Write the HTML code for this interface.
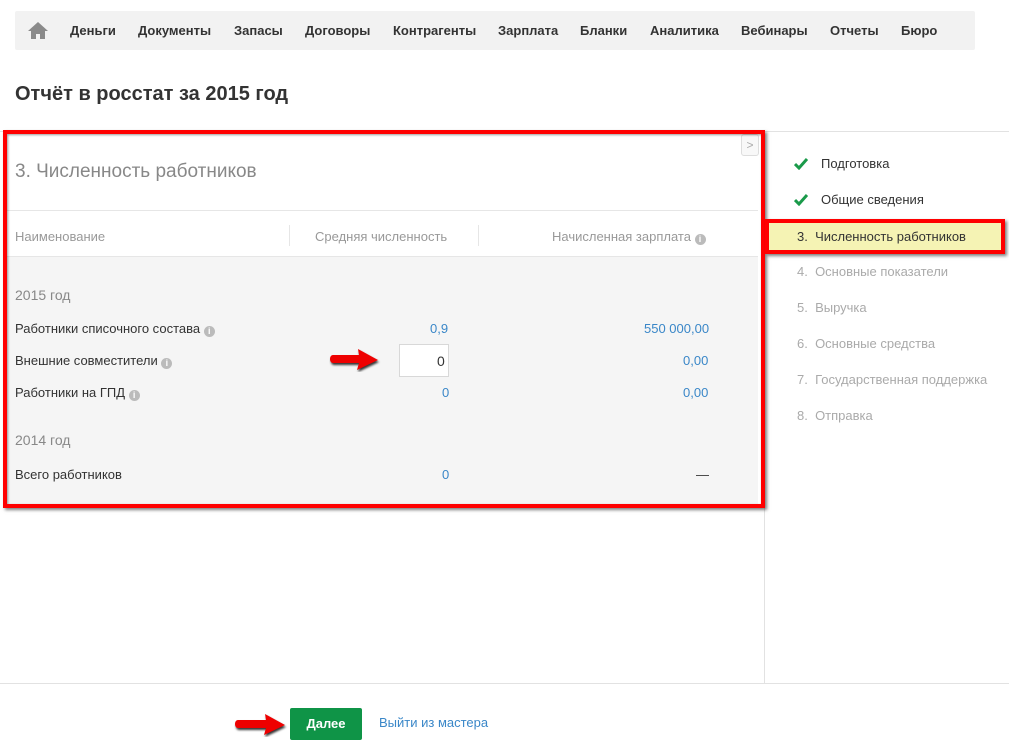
<!DOCTYPE html>
<html><head><meta charset="utf-8"><style>
body{margin:0;width:1009px;height:755px;position:relative;font-family:"Liberation Sans",Arial,sans-serif;background:#fff;overflow:hidden;font-size:13px;color:#333}
.a{position:absolute}
.nav{left:15px;top:11px;width:960px;height:39px;background:#f2f2f2;border-radius:2px}
.nav span{position:absolute;top:12px;font-weight:bold;font-size:13px;color:#333}
.g{color:#999}
.b{color:#3a87c8}
i{display:inline-block;width:11px;height:11px;border-radius:50%;background:#bbb;color:#fff;font-size:9px;text-align:center;line-height:11px;font-weight:bold;font-style:normal;vertical-align:-1px}
</style></head><body>
<div class="a nav">
<svg class="a" style="left:12px;top:10px" width="22" height="19" viewBox="0 0 22 19"><path d="M11 1L1 10h3v8h5v-5h4v5h5v-8h3z" fill="#8a8a8a"/></svg>
<span style="left:55px">Деньги</span><span style="left:123px">Документы</span><span style="left:219px">Запасы</span><span style="left:290px">Договоры</span><span style="left:378px">Контрагенты</span><span style="left:483px">Зарплата</span><span style="left:565px">Бланки</span><span style="left:635px">Аналитика</span><span style="left:726px">Вебинары</span><span style="left:815px">Отчеты</span><span style="left:886px">Бюро</span>
</div>
<div class="a" style="left:15px;top:83px;font-size:20px;font-weight:bold;color:#333">Отчёт в росстат за 2015 год</div>
<div class="a" style="left:0;top:131px;width:1009px;height:1px;background:#e2e2e2"></div>
<div class="a" style="left:764px;top:131px;width:1px;height:552px;background:#e2e2e2"></div>
<div class="a" style="left:0;top:683px;width:1009px;height:1px;background:#e2e2e2"></div>
<div class="a" style="left:7px;top:257px;width:751px;height:248px;background:#f5f5f5"></div>
<div class="a" style="left:7px;top:210px;width:751px;height:1px;background:#e6e6e6"></div>
<div class="a" style="left:7px;top:256px;width:751px;height:1px;background:#e6e6e6"></div>
<div class="a" style="left:741px;top:134px;width:16px;height:20px;border:1px solid #ddd;border-radius:3px;background:#f8f8f8;color:#aaa;font-size:12px;text-align:center;line-height:20px">&gt;</div>
<div class="a" style="left:3px;top:130px;width:754px;height:370px;border:4px solid #f00;box-shadow:2px 2px 3px rgba(0,0,0,.5), inset 1px 1px 2px rgba(0,0,0,.4)"></div>
<div class="a" style="left:15px;top:161px;font-size:19px;color:#888">3. Численность работников</div>
<div class="a g" style="left:15px;top:229px">Наименование</div>
<div class="a" style="left:289px;top:225px;width:1px;height:21px;background:#e6e6e6"></div>
<div class="a g" style="left:315px;top:229px">Средняя численность</div>
<div class="a" style="left:478px;top:225px;width:1px;height:21px;background:#e6e6e6"></div>
<div class="a g" style="left:552px;top:229px">Начисленная зарплата <i>i</i></div>
<div class="a" style="left:15px;top:287px;font-size:14px;color:#888">2015 год</div>
<div class="a" style="left:15px;top:321px">Работники списочного состава <i>i</i></div>
<div class="a b" style="left:430px;top:321px">0,9</div>
<div class="a b" style="left:644px;top:321px">550 000,00</div>
<div class="a" style="left:15px;top:353px">Внешние совместители <i>i</i></div>
<div class="a" style="left:399px;top:344px;width:48px;height:31px;border:1px solid #d8d8d8;background:#fff"></div>
<div class="a" style="left:437px;top:353px;font-size:14px">0</div>
<svg class="a" style="left:329px;top:348px" width="52" height="24" viewBox="0 0 52 24"><path d="M4 7h26l-1-6 20 11-21 10 2-7H4c-4 0-4-8 0-8z" fill="#e00" filter="drop-shadow(1px 2px 1px #333)"/></svg>
<div class="a b" style="left:683px;top:353px">0,00</div>
<div class="a" style="left:15px;top:385px">Работники на ГПД <i>i</i></div>
<div class="a b" style="left:442px;top:385px">0</div>
<div class="a b" style="left:683px;top:385px">0,00</div>
<div class="a" style="left:15px;top:432px;font-size:14px;color:#888">2014 год</div>
<div class="a" style="left:15px;top:467px">Всего работников</div>
<div class="a b" style="left:442px;top:467px">0</div>
<div class="a" style="left:696px;top:467px">—</div>
<svg class="a" style="left:794px;top:158px" width="14" height="12" viewBox="0 0 14 12"><path d="M1 6l4 4 8-9" stroke="#1a9a4a" stroke-width="3" fill="none"/></svg>
<div class="a" style="left:821px;top:156px">Подготовка</div>
<svg class="a" style="left:794px;top:194px" width="14" height="12" viewBox="0 0 14 12"><path d="M1 6l4 4 8-9" stroke="#1a9a4a" stroke-width="3" fill="none"/></svg>
<div class="a" style="left:821px;top:192px">Общие сведения</div>
<div class="a" style="left:765px;top:219px;width:240px;height:35px;background:#f5f3b4;border:4px solid #f00;box-sizing:border-box;box-shadow:2px 2px 3px rgba(0,0,0,.5)"></div>
<div class="a" style="left:797px;top:229px">3.&nbsp;&nbsp;Численность работников</div>
<div class="a g" style="left:797px;top:264px;color:#aaa">4.&nbsp;&nbsp;Основные показатели</div>
<div class="a g" style="left:797px;top:300px;color:#aaa">5.&nbsp;&nbsp;Выручка</div>
<div class="a g" style="left:797px;top:336px;color:#aaa">6.&nbsp;&nbsp;Основные средства</div>
<div class="a g" style="left:797px;top:372px;color:#aaa">7.&nbsp;&nbsp;Государственная поддержка</div>
<div class="a g" style="left:797px;top:408px;color:#aaa">8.&nbsp;&nbsp;Отправка</div>
<div class="a" style="left:290px;top:708px;width:72px;height:32px;background:#0f9447;border-radius:2px;color:#fff;font-weight:bold;text-align:center;line-height:32px">Далее</div>
<svg class="a" style="left:234px;top:713px" width="56" height="24" viewBox="0 0 56 24"><path d="M4 7h28l-1-6 20 11-21 10 2-7H4c-4 0-4-8 0-8z" fill="#e00" filter="drop-shadow(1px 2px 1px #333)"/></svg>
<div class="a b" style="left:379px;top:715px">Выйти из мастера</div>
</body></html>
